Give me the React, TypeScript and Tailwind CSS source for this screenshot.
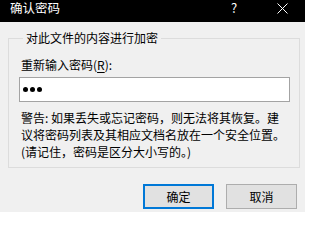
const FONT = { fontFamily: '"Microsoft YaHei", "Noto Sans CJK SC", "Noto Sans", sans-serif' };

const CloseIcon = () => (
  <svg width="11" height="11" viewBox="0 0 11 11" className="block">
    <path d="M0.5 0.5 L10.5 10.5 M10.5 0.5 L0.5 10.5" stroke="#fff" strokeWidth="1" fill="none" />
  </svg>
);

const App = () => {
  return (
    <div className="w-[305px] h-[212px] overflow-hidden bg-[#f0f0f0] text-[12px] text-black" style={FONT}>
      {/* title bar */}
      <div className="h-[22px] bg-black text-white flex items-start pt-[1px]">
        <span className="pl-[10px] leading-[14px] text-[12.5px]">确认密码</span>
        <span className="ml-auto leading-[14px] text-[13px] w-[10px] mr-[36px]">?</span>
        <span className="mt-[2px] mr-[17px]">
          <CloseIcon />
        </span>
      </div>

      {/* group box */}
      <fieldset className="mt-[8px] ml-[8px] mr-[5px] border border-[#dcdcdc] pl-[10px] pr-[9px] pb-[7px]">
        <legend className="ml-[4px] px-[3px] leading-[16px]">对此文件的内容进行加密</legend>
        <div className="pt-[11px] pl-[2px] leading-[16px]">
          重新输入密码(<span className="underline underline-offset-2">R</span>):
        </div>
        <div className="mt-[4px] h-[25px] w-full bg-white border border-[#a3a3a3] flex items-center gap-[2px] pl-[3px]">
          <span className="w-[5px] h-[5px] rounded-full bg-black" />
          <span className="w-[5px] h-[5px] rounded-full bg-black" />
          <span className="w-[5px] h-[5px] rounded-full bg-black" />
        </div>
        <p className="mt-[7px] pl-[2px] leading-[17px]">
          警告: 如果丢失或忘记密码，则无法将其恢复。建
          <br />
          议将密码列表及其相应文档名放在一个安全位置。
          <br />
          (请记住，密码是区分大小写的。)
        </p>
      </fieldset>

      {/* buttons */}
      <div className="mt-[16px] flex justify-end gap-[12px] pr-[8px]">
        <button className="w-[71px] h-[25px] bg-[#e1e1e1] border-2 border-[#0078d7] leading-none">确定</button>
        <button className="w-[71px] h-[25px] bg-[#e1e1e1] border border-[#adadad] leading-none">取消</button>
      </div>
    </div>
  );
};

export default App;
